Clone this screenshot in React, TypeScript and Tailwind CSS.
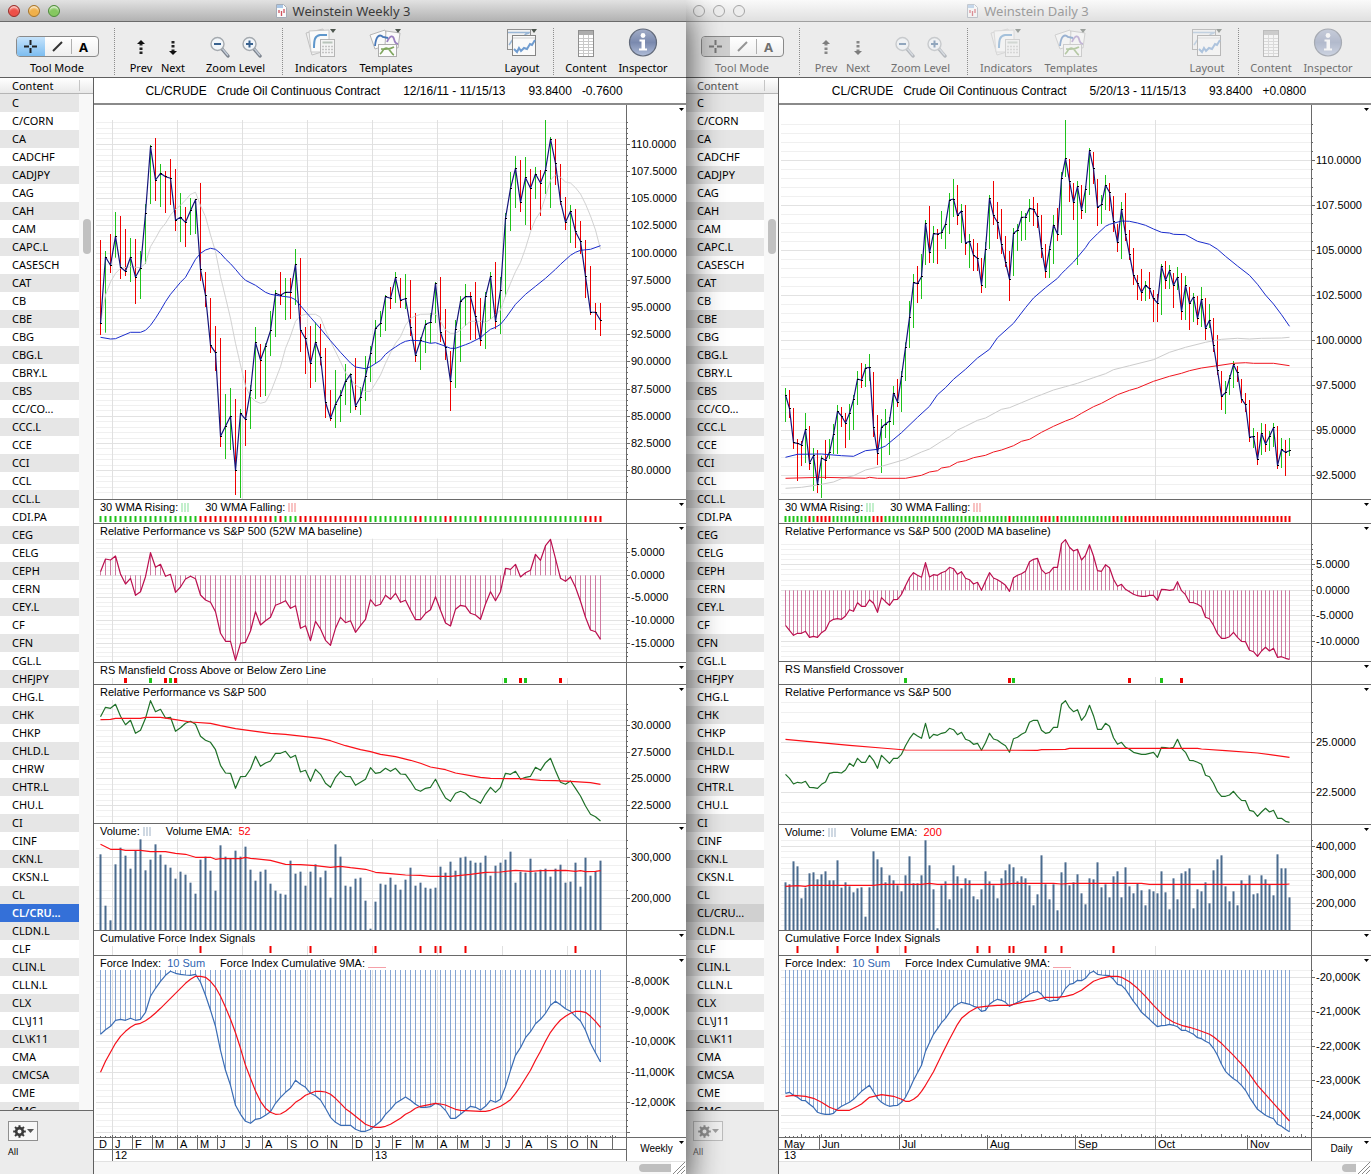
import { createContext, useContext } from "react";
import type { ReactNode } from "react";

type Point = [number, number];
type Bar = [number, number, number];

const UP = "#1fc31a";
const DOWN = "#f00000";

const symbols = [
  "C", "C/CORN", "CA", "CADCHF", "CADJPY", "CAG", "CAH", "CAM", "CAPC.L", "CASESCH",
  "CAT", "CB", "CBE", "CBG", "CBG.L", "CBRY.L", "CBS", "CC/CO...", "CCC.L", "CCE",
  "CCI", "CCL", "CCL.L", "CDI.PA", "CEG", "CELG", "CEPH", "CERN", "CEY.L", "CF",
  "CFN", "CGL.L", "CHFJPY", "CHG.L", "CHK", "CHKP", "CHLD.L", "CHRW", "CHTR.L", "CHU.L",
  "CI", "CINF", "CKN.L", "CKSN.L", "CL", "CL/CRU...", "CLDN.L", "CLF", "CLIN.L", "CLLN.L",
  "CLX", "CL\\J11", "CL\\K11", "CMA", "CMCSA", "CME", "CMG",
];

// Every sample is a depth in thirds of a pixel; each panel subtracts its own origin.
// Bars are [high, low, close].
const weeklyBars: Bar[] = [
  [420, 705, 670], [453, 698, 471], [402, 519, 496], [336, 473, 409], [348, 537, 502],
  [387, 528, 514], [414, 546, 472], [417, 612, 531], [453, 597, 504], [312, 492, 340],
  [135, 312, 140], [114, 303, 240], [192, 321, 220], [213, 339, 230], [177, 315, 235],
  [207, 393, 361], [279, 426, 352], [321, 441, 367], [294, 405, 332], [297, 402, 299],
  [249, 543, 508], [516, 621, 586], [594, 759, 736], [678, 813, 758], [714, 1041, 1009],
  [882, 1077, 979], [864, 1050, 949], [897, 1185, 1111], [927, 1194, 940], [810, 1038, 958],
  [855, 987, 872], [681, 897, 728], [732, 891, 780], [730, 888, 739], [633, 768, 692],
  [570, 711, 580], [516, 615, 586], [534, 660, 577], [534, 657, 577], [447, 615, 493],
  [474, 756, 690], [681, 822, 716], [678, 864, 790], [667, 846, 727], [672, 796, 772],
  [744, 954, 907], [870, 963, 955], [810, 984, 913], [870, 966, 886], [792, 915, 844],
  [820, 939, 823], [774, 930, 918], [861, 945, 892], [768, 903, 829], [738, 846, 761],
  [660, 792, 685], [633, 711, 670], [585, 693, 590], [561, 627, 595], [516, 609, 533],
  [534, 624, 601], [522, 627, 596], [540, 708, 682], [639, 786, 766], [712, 810, 722],
  [660, 759, 673], [639, 730, 667], [546, 669, 550], [531, 726, 697], [627, 780, 742],
  [753, 933, 844], [660, 864, 688], [588, 786, 604], [552, 678, 590], [576, 720, 590],
  [546, 718, 650], [594, 738, 721], [576, 747, 590], [516, 657, 529], [486, 687, 664],
  [531, 702, 571], [339, 591, 355], [216, 393, 265], [168, 324, 205], [180, 336, 307],
  [171, 375, 233], [207, 390, 265], [201, 297, 222], [210, 348, 249], [60, 282, 210],
  [111, 324, 117], [117, 255, 190], [192, 315, 304], [291, 390, 367], [315, 429, 334],
  [327, 444, 395], [363, 462, 424], [420, 594, 529], [498, 645, 636], [609, 690, 637],
  [609, 708, 661],
];

const weeklySlow: Point[] = [
  [0, 712], [2, 717], [3, 716], [6, 697], [8, 697], [9, 691], [10, 676], [11, 655], [12, 631], [13, 605],
  [14, 583], [15, 565], [16, 547], [17, 532], [18, 505], [19, 478], [20, 460], [21, 450], [22, 445],
  [23, 448], [24, 460], [25, 477], [26, 491], [27, 508], [28, 526], [29, 541], [31, 556], [33, 577],
  [34, 583], [36, 588], [38, 592], [39, 599], [40, 617], [42, 652], [44, 686], [46, 722], [48, 757],
  [50, 789], [51, 801], [53, 806], [54, 800], [56, 781], [57, 763], [58, 751], [59, 741], [60, 731],
  [61, 724], [62, 721], [64, 722], [66, 730], [67, 728], [69, 739], [70, 745], [71, 745], [73, 734],
  [74, 728], [76, 713], [77, 700], [78, 688], [79, 682], [80, 673], [81, 655], [83, 613], [85, 583],
  [87, 559], [89, 535], [91, 508], [92, 493], [94, 466], [95, 457], [96, 451], [98, 448], [100, 437],
];

const weeklyFast: Point[] = [
  [0, 670], [1, 585], [2, 546], [3, 520], [4, 505], [6, 500], [8, 503], [9, 490], [10, 440], [11, 415],
  [12, 388], [13, 370], [14, 345], [15, 328], [16, 316], [17, 300], [18, 283], [19, 277], [20, 317],
  [21, 350], [22, 405], [23, 455], [24, 530], [25, 592], [26, 655], [27, 730], [28, 795], [29, 858],
  [30, 890], [31, 904], [32, 910], [33, 906], [34, 878], [36, 800], [37, 745], [38, 708], [39, 664],
  [40, 647], [41, 643], [43, 643], [44, 652], [45, 690], [46, 724], [48, 785], [49, 818], [51, 855],
  [53, 874], [54, 874], [55, 850], [56, 825], [57, 790], [58, 758], [59, 730], [60, 710], [61, 676],
  [62, 655], [63, 648], [64, 643], [67, 642], [68, 664], [69, 690], [70, 700], [71, 700], [72, 690],
  [73, 676], [74, 664], [76, 664], [77, 667], [78, 658], [79, 645], [80, 630], [81, 587], [82, 550],
  [83, 515], [84, 487], [85, 445], [86, 395], [87, 358], [88, 335], [89, 290], [90, 240], [91, 225],
  [92, 232], [93, 246], [94, 249], [95, 263], [96, 282], [97, 312], [98, 348], [99, 390], [100, 448],
];

const weeklyRs = [
  230, 192, 195, 183, 237, 267, 250, 301, 290, 245, 173, 217, 208, 244, 238, 292, 276, 252, 244, 251,
  300, 315, 322, 350, 415, 439, 439, 496, 445, 442, 408, 350, 390, 377, 367, 331, 325, 317, 340, 332,
  400, 392, 437, 379, 402, 436, 451, 400, 367, 383, 377, 412, 392, 373, 314, 333, 328, 301, 313, 295,
  322, 316, 346, 374, 374, 355, 344, 305, 346, 384, 393, 343, 331, 334, 355, 360, 373, 327, 290, 317,
  290, 220, 223, 208, 246, 233, 226, 178, 196, 152, 133, 191, 250, 259, 246, 277, 319, 367, 405, 410,
  433,
];

const weeklyRp = [
  665, 637, 640, 628, 664, 689, 676, 715, 706, 670, 617, 650, 643, 669, 667, 709, 698, 685, 679, 688,
  724, 736, 742, 764, 811, 834, 835, 880, 845, 844, 822, 784, 814, 804, 798, 775, 775, 769, 788, 781,
  831, 826, 859, 823, 838, 865, 877, 847, 829, 844, 845, 871, 862, 853, 818, 835, 832, 820, 829, 820,
  837, 838, 859, 883, 889, 880, 877, 853, 883, 909, 919, 895, 889, 895, 909, 915, 925, 898, 877, 892,
  877, 835, 838, 829, 853, 847, 844, 817, 826, 803, 790, 827, 862, 868, 858, 880, 903, 933, 958, 965,
  978,
];

const weeklyRpMa: Point[] = [
  [0, 674], [2, 673], [3, 670], [8, 670], [9, 667], [12, 667], [15, 674], [18, 681], [22, 685], [24, 692],
  [27, 701], [31, 709], [34, 715], [37, 718], [41, 725], [44, 730], [46, 737], [49, 752], [52, 764],
  [54, 770], [56, 778], [59, 785], [62, 796], [64, 805], [66, 816], [69, 824], [71, 834], [74, 842],
  [76, 847], [78, 850], [84, 851], [88, 856], [91, 857], [94, 859], [98, 863], [100, 868],
];

const weeklyVolume = [
  103, 257, 301, 133, 83, 107, 146, 91, 58, 151, 119, 73, 104, 134, 143, 176, 155, 164, 188, 221,
  119, 110, 152, 212, 76, 110, 117, 92, 110, 80, 149, 182, 155, 149, 191, 212, 221, 224, 122, 161,
  155, 197, 155, 133, 172, 152, 233, 73, 110, 197, 200, 176, 173, 242, 326, 245, 191, 194, 173, 194,
  209, 179, 143, 197, 188, 203, 206, 203, 140, 158, 125, 152, 113, 110, 122, 128, 128, 107, 167, 137,
  128, 119, 95, 188, 155, 158, 116, 157, 149, 146, 170, 146, 134, 188, 185, 128, 200, 113, 167, 155,
  122,
];

const weeklyEma: Point[] = [
  [0, 73], [1, 80], [2, 88], [4, 88], [5, 91], [8, 91], [10, 95], [13, 95], [15, 100], [17, 103],
  [19, 112], [22, 112], [23, 118], [24, 116], [28, 116], [29, 112], [30, 115], [34, 121], [37, 133],
  [40, 134], [43, 137], [46, 142], [48, 139], [50, 143], [53, 148], [55, 157], [58, 161], [61, 165],
  [64, 166], [66, 169], [70, 169], [74, 163], [77, 157], [80, 156], [83, 151], [86, 154], [88, 152],
  [93, 151], [95, 154], [96, 152], [97, 155], [99, 154], [100, 152],
];

const weeklyForce = [
  643, 629, 619, 601, 598, 601, 595, 601, 598, 577, 529, 505, 484, 466, 454, 460, 463, 465, 466, 463,
  487, 526, 571, 619, 691, 751, 796, 856, 883, 904, 910, 898, 895, 886, 875, 850, 832, 817, 805, 781,
  793, 802, 820, 827, 840, 865, 892, 907, 916, 916, 916, 928, 934, 934, 928, 916, 904, 883, 868, 850,
  841, 831, 841, 853, 862, 862, 860, 850, 856, 871, 895, 895, 883, 871, 859, 862, 870, 859, 841, 847,
  838, 800, 751, 706, 683, 653, 635, 611, 598, 580, 556, 544, 554, 566, 574, 589, 603, 631, 670, 698,
  726,
];

const weeklyForceMa: Point[] = [
  [0, 757], [1, 724], [2, 697], [3, 670], [4, 649], [5, 634], [6, 622], [7, 613], [8, 610], [9, 602],
  [10, 592], [11, 579], [12, 565], [13, 550], [14, 535], [15, 520], [16, 505], [17, 490], [18, 478],
  [19, 469], [20, 469], [21, 472], [22, 484], [23, 502], [24, 529], [25, 562], [26, 598], [27, 638],
  [28, 685], [29, 736], [30, 775], [31, 813], [32, 844], [33, 865], [34, 877], [35, 883], [36, 882],
  [37, 874], [38, 862], [39, 847], [40, 838], [41, 826], [42, 820], [43, 814], [44, 814], [45, 816],
  [46, 823], [47, 835], [48, 850], [49, 866], [50, 877], [51, 889], [52, 901], [53, 913], [54, 919],
  [55, 922], [56, 922], [57, 919], [58, 913], [59, 904], [60, 895], [61, 883], [62, 875], [63, 865],
  [64, 859], [65, 856], [66, 853], [67, 850], [68, 852], [69, 855], [70, 862], [71, 868], [72, 871],
  [76, 874], [77, 874], [78, 871], [79, 865], [80, 859], [81, 850], [82, 839], [83, 820], [84, 799],
  [85, 775], [86, 751], [87, 721], [88, 694], [89, 664], [90, 637], [91, 617], [92, 600], [93, 589],
  [94, 580], [95, 574], [96, 574], [97, 577], [98, 589], [99, 604], [100, 622],
];

const dailyBars: Bar[] = [
  [864, 966, 885], [870, 954, 926], [924, 1047, 1028], [1017, 1143, 1030], [1023, 1098, 1035],
  [939, 1089, 989], [978, 1110, 1089], [1044, 1173, 1067], [1050, 1179, 1153], [1067, 1194, 1074],
  [1020, 1137, 1081], [1017, 1077, 1057], [972, 1062, 1003], [915, 1062, 934], [921, 981, 948],
  [939, 1044, 969], [912, 1020, 940], [885, 990, 898], [813, 915, 837], [789, 864, 841],
  [792, 861, 804], [762, 843, 802], [816, 1011, 982], [945, 1095, 1059], [957, 1119, 982],
  [927, 1014, 972], [951, 1065, 963], [858, 975, 879], [837, 921, 906], [813, 936, 829],
  [727, 843, 742], [603, 744, 653], [522, 684, 548], [498, 609, 551], [462, 597, 530],
  [360, 495, 370], [318, 489, 458], [378, 489, 401], [387, 492, 402], [333, 417, 398],
  [370, 447, 373], [279, 402, 300], [237, 351, 297], [255, 375, 346], [312, 429, 333],
  [315, 465, 429], [402, 504, 424], [417, 513, 466], [429, 513, 475], [474, 579, 555],
  [426, 564, 448], [285, 447, 295], [243, 375, 347], [306, 417, 367], [327, 462, 433],
  [408, 501, 486], [453, 603, 537], [384, 528, 400], [372, 453, 391], [333, 423, 352],
  [339, 420, 351], [297, 366, 325], [291, 378, 328], [309, 384, 350], [345, 474, 445],
  [432, 534, 514], [438, 534, 448], [345, 492, 375], [324, 423, 402], [216, 405, 235],
  [60, 231, 176], [177, 306, 244], [249, 360, 307], [243, 495, 260], [255, 357, 330],
  [258, 339, 268], [144, 285, 152], [156, 252, 206], [237, 378, 322], [285, 372, 314],
  [225, 330, 256], [249, 333, 277], [288, 396, 364], [372, 456, 428], [306, 477, 328],
  [279, 423, 403], [390, 480, 464], [444, 555, 526], [525, 600, 550], [507, 603, 577],
  [543, 603, 556], [516, 597, 566], [570, 666, 596], [582, 666, 609], [492, 645, 499],
  [483, 567, 541], [495, 567, 512], [519, 624, 556], [501, 570, 532], [519, 660, 634],
  [528, 660, 557], [561, 690, 611], [579, 666, 591], [588, 675, 655], [561, 681, 598],
  [594, 720, 685], [612, 684, 661], [654, 756, 737], [705, 825, 811], [813, 930, 889],
  [843, 942, 878], [825, 885, 836], [783, 864, 794], [798, 846, 818], [837, 909, 897],
  [879, 936, 914], [900, 1026, 1011], [984, 1044, 1010], [996, 1095, 1078], [969, 1065, 1000],
  [972, 1056, 1032], [993, 1053, 1009], [969, 1041, 983], [978, 1107, 1096], [1014, 1104, 1049],
  [1020, 1128, 1057], [1014, 1068, 1052],
];

const dailyFast: Point[] = [
  [0, 1072], [3, 1063], [9, 1062], [14, 1067], [17, 1069], [20, 1052], [23, 1048], [25, 1038], [26, 1028],
  [29, 998], [33, 952], [36, 919], [38, 884], [40, 863], [42, 838], [45, 808], [48, 774], [51, 748],
  [53, 713], [57, 670], [60, 623], [62, 594], [65, 563], [68, 535], [69, 521], [70, 509], [72, 486],
  [75, 443], [76, 425], [78, 401], [80, 379], [81, 373], [84, 363], [86, 364], [88, 369], [90, 376],
  [92, 387], [94, 397], [96, 399], [97, 403], [100, 404], [103, 424], [106, 433], [108, 448], [110, 469],
  [113, 498], [116, 526], [118, 553], [120, 585], [122, 612], [124, 644], [126, 679],
];

const dailyMid: Point[] = [
  [0, 1165], [4, 1162], [8, 1155], [12, 1146], [14, 1136], [17, 1127], [20, 1110], [24, 1099], [30, 1078],
  [34, 1056], [36, 1047], [39, 1024], [41, 1010], [43, 990], [45, 979], [48, 961], [50, 954], [54, 928],
  [56, 923], [59, 908], [62, 893], [64, 884], [67, 870], [70, 860], [73, 850], [77, 833], [80, 821],
  [82, 809], [86, 797], [92, 779], [96, 757], [100, 742], [105, 727], [109, 718], [113, 715], [116, 717],
  [119, 715], [124, 714], [126, 712],
];

const dailySlow: Point[] = [
  [0, 1135], [9, 1132], [20, 1135], [21, 1132], [23, 1135], [30, 1135], [34, 1126], [36, 1116], [38, 1112],
  [39, 1104], [41, 1100], [43, 1087], [45, 1082], [47, 1073], [50, 1066], [52, 1056], [54, 1050],
  [57, 1037], [59, 1024], [61, 1018], [64, 997], [67, 979], [70, 963], [72, 954], [74, 940], [77, 920],
  [79, 910], [83, 884], [86, 871], [88, 864], [92, 844], [96, 829], [99, 820], [101, 812], [104, 804],
  [108, 797], [112, 790], [115, 788], [117, 790], [122, 790], [126, 797],
];

const dailyRs = [
  391, 406, 421, 415, 415, 409, 427, 424, 427, 413, 405, 380, 373, 371, 373, 363, 344, 349, 323, 334,
  334, 314, 325, 352, 308, 320, 331, 314, 313, 298, 272, 248, 233, 241, 247, 203, 246, 239, 241, 233,
  229, 217, 221, 238, 230, 250, 254, 267, 262, 286, 259, 233, 249, 254, 262, 271, 289, 248, 241, 236,
  229, 200, 193, 190, 224, 236, 232, 217, 217, 146, 134, 157, 168, 163, 195, 181, 149, 183, 227, 229,
  209, 218, 253, 274, 268, 283, 290, 298, 302, 304, 304, 301, 301, 316, 283, 284, 286, 284, 260, 287,
  299, 322, 323, 328, 335, 367, 371, 391, 416, 430, 430, 425, 412, 427, 439, 440, 466, 470, 484, 468,
  457, 468, 460, 487, 485, 490, 493,
];

const dailyRp = [
  838, 850, 867, 862, 864, 859, 877, 878, 880, 868, 861, 835, 832, 832, 834, 825, 805, 814, 790, 802,
  802, 781, 796, 820, 781, 793, 805, 790, 790, 778, 752, 731, 715, 723, 730, 685, 730, 718, 721, 715,
  712, 700, 704, 719, 712, 733, 737, 748, 745, 766, 743, 715, 732, 736, 745, 752, 772, 731, 727, 718,
  712, 682, 676, 676, 706, 715, 712, 697, 697, 628, 617, 638, 650, 644, 676, 661, 631, 662, 703, 703,
  685, 694, 728, 748, 742, 757, 763, 772, 775, 778, 778, 775, 772, 787, 757, 758, 760, 757, 733, 760,
  772, 796, 797, 802, 808, 841, 845, 865, 890, 904, 904, 900, 889, 904, 916, 917, 946, 949, 964, 951,
  940, 951, 946, 970, 970, 979, 982,
];

const dailyRpMa: Point[] = [
  [0, 733], [8, 742], [16, 751], [24, 759], [30, 765], [63, 766], [64, 764], [70, 763], [71, 760],
  [103, 760], [104, 762], [110, 767], [118, 774], [126, 787],
];

const dailyVolume = [
  187, 193, 124, 139, 235, 203, 160, 157, 178, 163, 154, 181, 181, 121, 203, 187, 199, 217, 205, 202,
  290, 202, 94, 118, 142, 187, 166, 181, 196, 214, 166, 109, 190, 190, 166, 61, 136, 208, 325, 196,
  184, 238, 136, 169, 205, 175, 181, 229, 238, 208, 154, 184, 196, 235, 175, 151, 133, 142, 184, 169,
  175, 196, 256, 223, 106, 193, 238, 193, 271, 157, 127, 196, 187, 163, 220, 253, 175, 178, 127, 202,
  193, 232, 169, 154, 232, 142, 199, 220, 190, 211, 256, 208, 214, 220, 154, 217, 268, 175, 238, 160,
  154, 145, 265, 208, 214, 187, 250, 151, 118, 106, 199, 244, 214, 256, 181, 193, 166, 223, 220, 166,
  178, 193, 226, 103, 145, 145, 232,
];

const dailyEma: Point[] = [
  [0, 199], [3, 197], [5, 199], [6, 196], [22, 196], [24, 193], [34, 193], [36, 190], [38, 193], [54, 193],
  [57, 190], [67, 190], [69, 192], [71, 190], [89, 190], [91, 193], [125, 193], [126, 192],
];

const dailyForce = [
  820, 817, 826, 832, 841, 842, 853, 862, 877, 881, 883, 883, 880, 867, 859, 853, 847, 838, 826, 814,
  805, 796, 815, 835, 847, 854, 859, 857, 856, 847, 832, 808, 781, 758, 736, 694, 668, 643, 626, 608,
  595, 577, 562, 553, 547, 550, 553, 559, 562, 574, 571, 553, 544, 538, 541, 547, 559, 553, 547, 541,
  532, 523, 517, 514, 523, 538, 544, 541, 541, 526, 505, 493, 490, 481, 482, 475, 460, 454, 463, 465,
  466, 467, 478, 493, 496, 508, 526, 544, 559, 577, 587, 598, 610, 620, 617, 616, 613, 616, 620, 631,
  631, 637, 643, 653, 656, 664, 670, 685, 706, 733, 754, 766, 776, 784, 796, 811, 832, 850, 868, 877,
  886, 892, 896, 913, 919, 928, 935,
];

const dailyForceMa: Point[] = [
  [0, 829], [2, 826], [5, 829], [7, 835], [9, 847], [11, 862], [13, 871], [16, 871], [18, 859], [19, 852],
  [21, 832], [24, 824], [27, 829], [29, 838], [30, 844], [31, 844], [32, 838], [33, 829], [34, 814],
  [35, 796], [37, 755], [39, 706], [41, 658], [43, 613], [44, 595], [46, 575], [48, 562], [50, 559],
  [53, 556], [56, 556], [58, 550], [60, 545], [62, 542], [64, 535], [65, 532], [68, 532], [70, 529],
  [72, 523], [74, 511], [76, 493], [77, 484], [79, 475], [81, 469], [83, 469], [84, 472], [86, 485],
  [88, 505], [90, 529], [92, 556], [94, 580], [95, 592], [97, 607], [99, 616], [101, 622], [103, 629],
  [104, 634], [106, 643], [107, 650], [109, 670], [112, 706], [115, 745], [118, 796], [122, 850], [126, 903],
];

type Scale = { first: number; step: number; labels: string[] };
type PlotSpec = { height: number; origin: number; top: number; scale?: Scale };
type Mark = [number, "g" | "r"];

type Chart = {
  name: string;
  active: boolean;
  range: string;
  change: string;
  period: string;
  pitch: number;
  gridX: number[];
  bars: Bar[];
  firstUp: boolean;
  averages: { color: string; points: Point[] }[];
  trend: string;
  rsTitle: string;
  rs: number[];
  rsZero: number;
  crossTitle: string;
  crosses: Mark[];
  rp: number[];
  rpMa: Point[];
  emaLength: string;
  volume: number[];
  ema: Point[];
  signals: number[];
  force: number[];
  forceMa: Point[];
  plots: { price: PlotSpec; trend: PlotSpec; rs: PlotSpec; cross: PlotSpec; rp: PlotSpec; volume: PlotSpec; signals: PlotSpec; force: PlotSpec };
  months: [number, string][];
  years: [number, string][];
  bigTick: number;
};

const weekly: Chart = {
  name: "Weinstein Weekly 3",
  active: true,
  range: "12/16/11 - 11/15/13",
  change: "-0.7600",
  period: "Weekly",
  pitch: 5,
  gridX: [18, 83, 148, 213, 278, 343, 408, 473],
  bars: weeklyBars,
  firstUp: false,
  averages: [
    { color: "#d2d2d2", points: weeklyFast },
    { color: "#1a2ccc", points: weeklySlow },
  ],
  trend: "g20 r15 g1 r1 g3 r14 g9 r2 g4 r2 g5 r1 g20 r4",
  rsTitle: "Relative Performance vs S&P 500 (52W MA baseline)",
  rs: weeklyRs,
  rsZero: 241,
  crossTitle: "RS Mansfield Cross Above or Below Zero Line",
  crosses: [[5, "r"], [10, "g"], [13, "r"], [14, "g"], [15, "r"], [81, "g"], [84, "r"], [85, "g"], [92, "r"]],
  rp: weeklyRp,
  rpMa: weeklyRpMa,
  emaLength: "52",
  volume: weeklyVolume,
  ema: weeklyEma,
  signals: [20, 34, 42, 55, 64, 67, 68, 73, 95],
  force: weeklyForce,
  forceMa: weeklyForceMa,
  plots: {
    price: {
      height: 394, origin: 15, top: 60,
      scale: {
        first: 133, step: 81.6,
        labels: ["110.0000", "107.5000", "105.0000", "102.5000", "100.0000", "97.5000", "95.0000", "92.5000", "90.0000", "87.5000", "85.0000", "82.5000", "80.0000"],
      },
    },
    trend: { height: 23, origin: 15, top: 90 },
    rs: { height: 138, origin: 87, top: 131, scale: { first: 173, step: 67.8, labels: ["5.0000", "0.0000", "-5.0000", "-10.0000", "-15.0000"] } },
    cross: { height: 21, origin: 504, top: 549 },
    rp: { height: 138, origin: 570, top: 615, scale: { first: 691, step: 80, labels: ["30.0000", "27.5000", "25.0000", "22.5000"] } },
    volume: { height: 106, origin: 12, top: 57, scale: { first: 111, step: 124, labels: ["300,000", "200,000"] } },
    signals: { height: 24, origin: 333, top: 378 },
    force: { height: 181, origin: 408, top: 450, scale: { first: 484, step: 90.8, labels: ["-8,000K", "-9,000K", "-10,000K", "-11,000K", "-12,000K"] } },
  },
  months: [
    [2, "D"], [18, "J"], [38, "F"], [58, "M"], [83, "A"], [103, "M"], [123, "J"], [148, "J"], [168, "A"], [193, "S"],
    [213, "O"], [233, "N"], [258, "D"], [278, "J"], [298, "F"], [318, "M"], [343, "A"], [363, "M"], [388, "J"],
    [408, "J"], [428, "A"], [453, "S"], [473, "O"], [493, "N"], [518, ""],
  ],
  years: [[18, "12"], [278, "13"]],
  bigTick: 0,
};

const daily: Chart = {
  name: "Weinstein Daily 3",
  active: false,
  range: "5/20/13 - 11/15/13",
  change: "+0.0800",
  period: "Daily",
  pitch: 4,
  gridX: [120, 376],
  bars: dailyBars,
  firstUp: true,
  averages: [
    { color: "#cccccc", points: dailyMid },
    { color: "#f0141e", points: dailySlow },
    { color: "#1a2ccc", points: dailyFast },
  ],
  trend: "g6 r1 g1 r4 g10 r3 g31 r1 g7 r3 g1 r1 g13 r2 g1 r42",
  rsTitle: "Relative Performance vs S&P 500 (200D MA baseline)",
  rs: dailyRs,
  rsZero: 286,
  crossTitle: "RS Mansfield Crossover",
  crosses: [[30, "g"], [56, "r"], [57, "g"], [86, "r"], [94, "g"], [99, "r"]],
  rp: dailyRp,
  rpMa: dailyRpMa,
  emaLength: "200",
  volume: dailyVolume,
  ema: dailyEma,
  signals: [3, 13, 23, 30, 48, 51, 56, 57, 65, 69, 82],
  force: dailyForce,
  forceMa: dailyForceMa,
  plots: {
    price: {
      height: 394, origin: 15, top: 60,
      scale: { first: 181, step: 135, labels: ["110.0000", "107.5000", "105.0000", "102.5000", "100.0000", "97.5000", "95.0000", "92.5000"] },
    },
    trend: { height: 23, origin: 15, top: 90 },
    rs: { height: 137, origin: 87, top: 134, scale: { first: 209, step: 76.8, labels: ["5.0000", "0.0000", "-5.0000", "-10.0000"] } },
    cross: { height: 22, origin: 501, top: 546 },
    rp: { height: 139, origin: 570, top: 615, scale: { first: 742, step: 150, labels: ["25.0000", "22.5000"] } },
    volume: { height: 105, origin: 15, top: 60, scale: { first: 78, step: 85.5, labels: ["400,000", "300,000", "200,000"] } },
    signals: { height: 24, origin: 333, top: 378 },
    force: { height: 181, origin: 408, top: 450, scale: { first: 472, step: 103.4, labels: ["-20,000K", "-21,000K", "-22,000K", "-23,000K", "-24,000K"] } },
  },
  months: [[2, "May"], [40, "Jun"], [120, "Jul"], [208, "Aug"], [296, "Sep"], [376, "Oct"], [468, "Nov"]],
  years: [[2, "13"]],
  bigTick: 5,
};

const ChartContext = createContext<Chart>(weekly);

const yOf = (plot: PlotSpec, v: number) => (v - plot.origin) / 3;

function Line({ plot, points, color, width = 1 }: { plot: PlotSpec; points: Point[]; color: string; width?: number }) {
  const { pitch } = useContext(ChartContext);
  return (
    <polyline
      fill="none"
      stroke={color}
      strokeWidth={width}
      strokeLinejoin="round"
      points={points.map(([i, v]) => `${6.5 + i * pitch},${yOf(plot, v).toFixed(1)}`).join(" ")}
    />
  );
}

const indexed = (values: number[]): Point[] => values.map((v, i) => [i, v]);

function gridLevels(plot: PlotSpec) {
  if (!plot.scale) return [];
  const { first, step, labels } = plot.scale;
  const levels: { y: number; major: boolean; label?: string }[] = [];
  for (let k = -15; k < labels.length * 5 + 10; k++) {
    const v = first + (k * step) / 5;
    const y = Math.floor(yOf(plot, v));
    if (v < plot.top || y > plot.height - 3) continue;
    levels.push({ y, major: k % 5 === 0, label: k % 5 === 0 ? labels[k / 5] : undefined });
  }
  return levels;
}

function MenuArrow({ label }: { label: string }) {
  return (
    <button type="button" aria-label={label} className="absolute top-[3px] right-[2px] block">
      <svg width="5" height="3" className="block">
        <path d="M0 0h5L2.5 3z" fill="#000" />
      </svg>
    </button>
  );
}

function Panel({ plot, title, name, children }: { plot: PlotSpec; title?: ReactNode; name: string; children: ReactNode }) {
  const { gridX } = useContext(ChartContext);
  const levels = gridLevels(plot);
  const top = yOf(plot, plot.top);
  return (
    <section aria-label={name} className="flex border-b border-[#6a6a6a] bg-white">
      <div className="relative min-w-0 flex-1">
        <svg className="block w-full" height={plot.height}>
          {levels.map((l) => (
            <rect key={l.y} x="2" y={l.y} width="100%" height="1" fill={l.major ? "#e2e2e2" : "#f0f0f0"} />
          ))}
          {gridX.map((x) => (
            <rect key={x} x={x} y={top} width="1" height={Math.max(plot.height - top, 0)} fill="#e0e0e0" />
          ))}
          {children}
        </svg>
        {title && <div className="absolute top-0 left-[6px] flex h-[14px] items-center whitespace-pre">{title}</div>}
      </div>
      <div className="relative w-[60px] shrink-0 border-l border-[#6a6a6a]">
        <svg className="block w-full" height={plot.height}>
          {levels.map((l) => (
            <g key={l.y}>
              <rect x="0" y={l.y} width={l.major ? 3 : 1} height="1" fill="#6a6a6a" />
              {l.label && (
                <text x="4" y={l.y + 4} fill="#000">
                  {l.label}
                </text>
              )}
            </g>
          ))}
        </svg>
        <MenuArrow label={`${name} options`} />
      </div>
    </section>
  );
}

function Swatch({ color }: { color: string }) {
  return (
    <svg width="8" height="9" className="ml-[3px]">
      <path d="M1 0v9M4 0v9M7 0v9" stroke={color} strokeWidth="1.6" />
    </svg>
  );
}

function PricePanel() {
  const { bars, pitch, averages, firstUp, plots } = useContext(ChartContext);
  const plot = plots.price;
  return (
    <Panel plot={plot} name="Price">
      {bars.map(([high, low, close], i) => {
        const up = i === 0 ? firstUp : close < bars[i - 1][2];
        return (
          <rect
            key={i}
            x={6 + i * pitch}
            y={yOf(plot, high)}
            width="1"
            height={(low - high) / 3}
            fill={up ? UP : DOWN}
          />
        );
      })}
      {averages.map((a) => (
        <Line key={a.color} plot={plot} points={a.points} color={a.color} />
      ))}
      <Line plot={plot} points={bars.map((b, i) => [i, b[2]])} color="#14147a" width={1.2} />
      {bars.map((b, i) => (
        <rect key={i} x={6 + i * pitch} y={Math.floor(yOf(plot, b[2]))} width="2" height="1" fill="#000" />
      ))}
    </Panel>
  );
}

function TrendPanel() {
  const { trend, pitch, plots } = useContext(ChartContext);
  const marks = trend.split(" ").flatMap((run) => Array<string>(Number(run.slice(1))).fill(run[0]));
  return (
    <Panel
      plot={plots.trend}
      name="30 WMA"
      title={
        <>
          <span>30 WMA Rising:</span>
          <Swatch color="#b4ecc0" />
          <span className="ml-4">30 WMA Falling:</span>
          <Swatch color="#f7b4b4" />
        </>
      }
    >
      {marks.map((m, i) => (
        <rect key={i} x={5.5 + i * pitch} y="16" width="2" height="6" fill={m === "g" ? UP : DOWN} />
      ))}
    </Panel>
  );
}

function StrengthPanel() {
  const { rs, rsZero, rsTitle, pitch, plots } = useContext(ChartContext);
  const zero = yOf(plots.rs, rsZero);
  return (
    <Panel plot={plots.rs} name="Relative strength" title={rsTitle}>
      {rs.map((v, i) => {
        const y = yOf(plots.rs, v);
        return (
          <rect key={i} x={6 + i * pitch} y={Math.min(y, zero)} width="1" height={Math.abs(y - zero)} fill="#cf7ba2" />
        );
      })}
      <Line plot={plots.rs} points={indexed(rs)} color="#bb0f4e" width={1.2} />
    </Panel>
  );
}

function CrossPanel() {
  const { crosses, crossTitle, pitch, plots } = useContext(ChartContext);
  return (
    <Panel plot={plots.cross} name="Mansfield crossings" title={crossTitle}>
      {crosses.map(([i, c]) => (
        <rect key={i} x={5 + i * pitch} y={plots.cross.height - 6} width="3" height="5" fill={c === "g" ? UP : DOWN} />
      ))}
    </Panel>
  );
}

function PerformancePanel() {
  const { rp, rpMa, plots } = useContext(ChartContext);
  return (
    <Panel plot={plots.rp} name="Relative performance" title="Relative Performance vs S&P 500">
      <Line plot={plots.rp} points={indexed(rp)} color="#1f7028" width={1.2} />
      <Line plot={plots.rp} points={rpMa} color="#fb1018" width={1.2} />
    </Panel>
  );
}

function VolumePanel() {
  const { volume, ema, emaLength, pitch, plots } = useContext(ChartContext);
  const plot = plots.volume;
  return (
    <Panel
      plot={plot}
      name="Volume"
      title={
        <>
          <span>Volume:</span>
          <Swatch color="#c3cfdb" />
          <span className="ml-[15px]">Volume EMA:</span>
          <span className="ml-[6px] text-[#fb0007]">{emaLength}</span>
        </>
      }
    >
      {volume.map((v, i) => {
        const y = yOf(plot, v);
        return <rect key={i} x={5.5 + i * pitch} y={y} width="2" height={plot.height - y} fill="#4a6b8e" />;
      })}
      <Line plot={plot} points={ema} color="#fb1018" width={1.2} />
    </Panel>
  );
}

function SignalsPanel() {
  const { signals, pitch, plots } = useContext(ChartContext);
  return (
    <Panel plot={plots.signals} name="Force signals" title="Cumulative Force Index Signals">
      {signals.map((i) => (
        <rect key={i} x={5.5 + i * pitch} y="15" width="2" height="7" fill={DOWN} />
      ))}
    </Panel>
  );
}

function ForcePanel() {
  const { force, forceMa, pitch, months, bigTick, plots } = useContext(ChartContext);
  const plot = plots.force;
  const top = yOf(plot, plot.top);
  const ticks = Array.from({ length: Math.floor(524 / pitch) }, (_, i) => i);
  return (
    <Panel
      plot={plot}
      name="Force index"
      title={
        <>
          <span>Force Index:</span>
          <span className="ml-[6px] text-[#2f64b0]">10 Sum</span>
          <span className="ml-[15px]">Force Index Cumulative 9MA:</span>
          <span className="mt-[9px] ml-[3px] h-px w-[18px] bg-[#f5a0a8]" />
        </>
      }
    >
      {force.map((v, i) => (
        <rect key={i} x={6 + i * pitch} y={top} width="1" height={yOf(plot, v) - top} fill="#86a5d2" />
      ))}
      <Line plot={plot} points={indexed(force)} color="#3a6cb4" width={1.2} />
      <Line plot={plot} points={forceMa} color="#f5101a" width={1.2} />
      {ticks.map((i) => {
        const tall = bigTick > 0 && i % bigTick === 4;
        return <rect key={i} x={6 + i * pitch} y={tall ? 178 : 180} width="1" height={tall ? 3 : 1} fill="#6a6a6a" />;
      })}
      {months.slice(1).map(([x]) => (
        <rect key={x} x={x} y="179" width="1" height="2" fill="#6a6a6a" />
      ))}
    </Panel>
  );
}

function TimeAxis() {
  const { months, years, period } = useContext(ChartContext);
  return (
    <div className="flex bg-white">
      <svg className="block min-w-0 flex-1" height="23">
        <rect x="0" y="11" width="100%" height="1" fill="#6a6a6a" />
        {months.map(([x, label]) => (
          <g key={x}>
            {x > 2 && <rect x={x} y="0" width="1" height="11" fill="#6a6a6a" />}
            <text x={x + 3} y="10">
              {label}
            </text>
          </g>
        ))}
        {years.map(([x, label]) => (
          <g key={x}>
            {x > 2 && <rect x={x} y="0" width="1" height="23" fill="#6a6a6a" />}
            <text x={x + 3} y="21">
              {label}
            </text>
          </g>
        ))}
      </svg>
      <div className="relative flex w-[60px] shrink-0 items-center justify-center border-l border-[#6a6a6a] pb-[2px]">
        <button type="button" className="text-[10px] leading-3">
          {period}
        </button>
        <MenuArrow label="Period" />
      </div>
    </div>
  );
}

/* Toolbar icons */

function ArrowIcon({ flip }: { flip?: boolean }) {
  return (
    <svg width="14" height="21" viewBox="0 0 14 21" className={flip ? "rotate-180" : undefined}>
      <path d="M7 3l4 4H3z" fill="#111" />
      <path d="M5.5 7h3v1.500h-3zM5.5 10.500h3v2.500h-3zM5.5 14.500h3V17h-3z" fill="#222" />
    </svg>
  );
}

function MagnifierIcon({ plus }: { plus?: boolean }) {
  return (
    <svg width="22" height="23" viewBox="0 0 22 23">
      <path d="M13 13l6 7" stroke="#7c838d" strokeWidth="3.4" strokeLinecap="round" />
      <path d="M13.5 13l5.5 6.5" stroke="#c3ccd8" strokeWidth="1.4" />
      <circle cx="8.5" cy="8" r="6.5" fill="#f2f6fa" stroke="#a5aaaf" strokeWidth="1.4" />
      <path d={plus ? "M5 8h7M8.5 4.5v7" : "M5 8h7"} stroke="#39628f" strokeWidth="2" />
    </svg>
  );
}

function DropMark() {
  return <path d="M26 1h6l-3 4z" fill="#4d564e" />;
}

function IndicatorsIcon() {
  return (
    <svg width="34" height="30" viewBox="0 0 34 30">
      <path d="M2 5l17-4 5 21-16 5z" fill="#f0f0f0" stroke="#c2c2c2" />
      <path d="M5 3l20-1v22H7z" fill="#fafafa" stroke="#c8c8c8" />
      <path d="M10 20c0-9 1-12 6-13h7" fill="none" stroke="#5f97cc" strokeWidth="2" />
      <rect x="16.5" y="11.5" width="14" height="17" fill="#f4f4f4" stroke="#b5b5b5" />
      <path d="M18.5 14.5h10" stroke="#b9c4bb" strokeWidth="2" />
      <path d="M18 18.5h11M18 21.5h11M18 24.5h11" stroke="#c4c4c4" strokeWidth="1.5" strokeDasharray="2 1" />
      <DropMark />
    </svg>
  );
}

function TemplatesIcon() {
  return (
    <svg width="34" height="30" viewBox="0 0 34 30">
      <path d="M1 7l15-5 5 14-15 5z" fill="#fafafa" stroke="#b5b5b5" />
      <path d="M17 3l14 2-2 15-13-3z" fill="#fafafa" stroke="#b5b5b5" />
      <path d="M18 14c3-7 6-7 7-3s2 5 4 5" fill="none" stroke="#9a7fc0" strokeWidth="1.8" />
      <path d="M6 18c1-11 5-12 8-9l5 1" fill="none" stroke="#4878b8" strokeWidth="1.8" />
      <rect x="9.5" y="16.5" width="18" height="12" fill="#fbfbfb" stroke="#adadad" />
      <path d="M11 26c3-2 3-6 6-6 4 0 5 6 8 7M12 21c4 0 8 1 13-2" fill="none" stroke="#7fa65e" strokeWidth="1.6" />
      <DropMark />
    </svg>
  );
}

function LayoutIcon() {
  return (
    <svg width="34" height="30" viewBox="0 0 34 30">
      <rect x="2.5" y="1.5" width="23" height="20" fill="#f2f2f2" stroke="#909090" />
      <path d="M3 4.5h22M4 17l4-6 3-2 4 3 6-6 3-1" stroke="#9ab7d6" strokeWidth="1.5" fill="none" />
      <rect x="7.5" y="7.5" width="23" height="20" fill="#fafafa" stroke="#858585" />
      <path d="M8 10h22" stroke="#d0d0d0" />
      <path d="M9 21l3 3 2-4 2 3 3-3 3 1 3-5 2 1 3-5" fill="none" stroke="#6f9cd0" strokeWidth="2" />
      <DropMark />
    </svg>
  );
}

function ContentIcon() {
  return (
    <svg width="16" height="28" viewBox="0 0 16 28">
      <rect x=".5" y=".5" width="15" height="26" fill="#fff" stroke="#8e8e8e" />
      <path d="M1 3h14" stroke="#adadad" strokeWidth="4" />
      <path d="M1 8.5h14M1 11.5h14M1 14.5h14M1 17.5h14M1 20.5h14M1 23.5h14M5.5 5v21M10.5 5v21" stroke="#c9c9c9" />
    </svg>
  );
}

function InspectorIcon() {
  return (
    <svg width="30" height="30" viewBox="0 0 30 30">
      <defs>
        <linearGradient id="inspector" x1="0" y1="0" x2="0" y2="1">
          <stop offset="0" stopColor="#a3aec8" />
          <stop offset=".5" stopColor="#7a89ae" />
          <stop offset="1" stopColor="#b0bdd8" />
        </linearGradient>
      </defs>
      <circle cx="15" cy="14.5" r="13.5" fill="url(#inspector)" stroke="#626a7a" strokeWidth="1.2" />
      <circle cx="15" cy="7.5" r="2.4" fill="#fff" />
      <path d="M11.5 11.5H17v9h2v2h-8v-2h2.5v-7h-2z" fill="#fff" />
    </svg>
  );
}

function GearIcon() {
  return (
    <svg width="13" height="13" viewBox="-7 -7 14 14">
      <circle r="3.6" fill="none" stroke="#3a3a3a" strokeWidth="2.8" />
      <path
        d="M0-6.800V-4M0 6.800V4M-6.800 0H-4M6.800 0H4M-4.800-4.800l2 2M4.800 4.800l-2-2M-4.800 4.800l2-2M4.800-4.800l-2 2"
        stroke="#3a3a3a"
        strokeWidth="2.2"
      />
    </svg>
  );
}

function ToolButton({ label, width, children }: { label: string; width: string; children: ReactNode }) {
  return (
    <button type="button" className={`flex flex-col items-center ${width}`}>
      <span className="flex h-[32px] items-end justify-center pb-px">{children}</span>
      <span className="text-[11px] leading-[18px]">{label}</span>
    </button>
  );
}

function Divider() {
  return <div className="mt-[-2px] h-[50px] w-px shrink-0 border-l border-dotted border-[#8c8c8c]" />;
}

function Toolbar() {
  const { active } = useContext(ChartContext);
  const picked = active ? "bg-gradient-to-b from-[#c5e3fb] to-[#7cbdf0]" : "bg-[#cfcfcf]";
  return (
    <div
      className={`flex h-14 shrink-0 border-b border-[#5f5f5f] bg-[#ececec] pt-[5px] ${active ? "text-black" : "text-[#707070]"}`}
    >
      <div className={`flex min-w-0 flex-1 overflow-hidden ${active ? "" : "[&_svg]:opacity-50"}`}>
        <div className="flex w-[114px] shrink-0 flex-col items-center">
          <div className="flex h-[32px] items-end pb-[2px]">
            <div className="flex h-[21px] overflow-hidden rounded-[4px] border border-[#8a8a8a] bg-gradient-to-b from-white to-[#efefef]">
              <button type="button" aria-label="Crosshair" className={`flex w-7 items-center justify-center ${picked}`}>
                <svg width="13" height="13">
                  <path d="M6.5 0v5M6.5 8v5M0 6.5h5M8 6.5h5" stroke="#222" strokeWidth="2" />
                </svg>
              </button>
              <button type="button" aria-label="Line" className="flex w-[26px] items-center justify-center">
                <svg width="11" height="11">
                  <path d="M1 10l9-9" stroke="#333" strokeWidth="2" />
                </svg>
              </button>
              <button
                type="button"
                aria-label="Text"
                className="my-[2px] w-[27px] border-l border-[#b0b0b0] pr-[2px] text-[13px] leading-[14px] font-bold"
              >
                A
              </button>
            </div>
          </div>
          <span className="text-[11px] leading-[18px]">Tool Mode</span>
        </div>
        <Divider />
        <div className="flex shrink-0 pl-[10px]">
          <ToolButton label="Prev" width="w-8">
            <ArrowIcon />
          </ToolButton>
          <ToolButton label="Next" width="w-8">
            <ArrowIcon flip />
          </ToolButton>
        </div>
        <div className="flex w-[93px] shrink-0 flex-col items-center">
          <div className="flex h-[32px] items-end gap-[10px]">
            <button type="button" aria-label="Zoom out">
              <MagnifierIcon />
            </button>
            <button type="button" aria-label="Zoom in">
              <MagnifierIcon plus />
            </button>
          </div>
          <span className="text-[11px] leading-[18px]">Zoom Level</span>
        </div>
        <Divider />
        <ToolButton label="Indicators" width="w-[76px]">
          <IndicatorsIcon />
        </ToolButton>
        <ToolButton label="Templates" width="w-[54px]">
          <TemplatesIcon />
        </ToolButton>
        <div className="flex-1" />
        <ToolButton label="Layout" width="w-[62px]">
          <LayoutIcon />
        </ToolButton>
        <Divider />
        <ToolButton label="Content" width="w-16">
          <ContentIcon />
        </ToolButton>
        <div className="flex shrink-0 pr-[18px]">
          <ToolButton label="Inspector" width="w-[50px]">
            <InspectorIcon />
          </ToolButton>
        </div>
      </div>
    </div>
  );
}

function TitleBar() {
  const { active, name } = useContext(ChartContext);
  const lights = active
    ? ["border-[#96302b] bg-[#ee5048]", "border-[#a5742b] bg-[#f0b04a]", "border-[#4e8a3c] bg-[#86c860]"]
    : ["border-[#a5a5a5] bg-[#eeeeee]", "border-[#a5a5a5] bg-[#eeeeee]", "border-[#a5a5a5] bg-[#eeeeee]"];
  return (
    <header
      className={`flex h-[22px] shrink-0 items-center border-b px-2 ${
        active ? "border-[#6b6b6b] bg-gradient-to-b from-[#e2e2e2] to-[#b2b2b2]" : "border-[#a0a0a0] bg-gradient-to-b from-[#fafafa] to-[#e0e0e0]"
      }`}
    >
      <div className="flex flex-1 gap-2">
        {["Close", "Minimize", "Zoom"].map((label, i) => (
          <button
            key={label}
            type="button"
            aria-label={label}
            className={`size-3 rounded-full border ${lights[i]} ${active ? "shadow-[inset_0_3px_2px_-1px_rgba(255,255,255,0.7)]" : ""}`}
          />
        ))}
      </div>
      <h1 className={`flex items-center gap-[6px] text-[13px] leading-5 ${active ? "text-[#3a3a3a]" : "text-[#9c9c9c]"}`}>
        <svg width="11" height="14" viewBox="0 0 11 14" className={active ? "" : "opacity-60"}>
          <path d="M.5.5h7l3 3v10H.5z" fill="#fbfbfb" stroke="#a5adb8" />
          <path d="M1 1h6v3H1z" fill="#a9c6e6" />
          <path d="M3 6v3M5.5 7v5M8 5v4" stroke="#d0525c" strokeWidth="1.3" />
        </svg>
        {name}
      </h1>
      <div className="flex-1" />
    </header>
  );
}

function Sidebar() {
  const { active } = useContext(ChartContext);
  return (
    <aside className="flex w-[94px] shrink-0 flex-col border-r border-[#5f5f5f] text-[11px]">
      <div className="flex h-4 shrink-0 border-b border-[#b5b5b5] bg-gradient-to-b from-white to-[#e9e9e9] leading-4">
        <span className={`my-[2px] w-20 border-r border-[#c5c5c5] pl-3 leading-3 ${active ? "" : "text-[#555]"}`}>Content</span>
      </div>
      <div className="flex h-0 grow overflow-hidden bg-white">
        <ul className="w-[79px]">
          {symbols.map((s, i) => {
            const selected = s === "CL/CRU...";
            let row = i % 2 === 0 ? "bg-[#e6e6e6]" : "bg-white";
            if (selected) row = active ? "bg-[#3470d8] text-white font-semibold" : "bg-[#d0d0d0]";
            return (
              <li key={s}>
                <button type="button" className={`block h-[18px] w-full pl-3 text-left leading-[18px] ${row}`}>
                  {s}
                </button>
              </li>
            );
          })}
        </ul>
        <div className="flex-1 bg-[#f8f8f8] pt-[125px] pl-1">
          <div className="h-[35px] w-2 rounded-full bg-[#c1c1c1]" />
        </div>
      </div>
      <footer className="h-16 shrink-0 border-t border-[#6a6a6a] bg-[#ececec] pt-[10px] pl-2">
        <button
          type="button"
          aria-label="Actions"
          className={`flex h-5 w-[30px] items-center justify-center gap-px border border-[#8f8f8f] bg-[#f7f7f7] ${active ? "" : "opacity-50"}`}
        >
          <GearIcon />
          <svg width="7" height="4">
            <path d="M0 0h7L3.5 4z" fill="#555" />
          </svg>
        </button>
        <p className={`mt-[3px] text-[9px] leading-4 ${active ? "" : "text-[#666]"}`}>All</p>
      </footer>
    </aside>
  );
}

function ChartWindow({ chart }: { chart: Chart }) {
  return (
    <ChartContext.Provider value={chart}>
      <div
        className={`relative flex min-w-0 flex-1 flex-col font-['Lucida_Grande','Noto_Sans',sans-serif] text-black ${
          chart.active ? "z-10 rounded-t-[4px] shadow-[0_14px_36px_rgba(0,0,0,0.8)]" : "-ml-px"
        }`}
      >
        <TitleBar />
        <Toolbar />
        <div className="flex flex-1">
          <Sidebar />
          <main className="flex min-w-0 flex-1 flex-col bg-white font-['Liberation_Sans',Arial,sans-serif] text-[11px]">
            <div className="flex h-[27px] items-center justify-center border-b-2 border-[#8a8a8a] pr-3 text-[12px] whitespace-nowrap">
              <span>CL/CRUDE</span>
              <span className="ml-[10px]">Crude Oil Continuous Contract</span>
              <span className="ml-[23px]">{chart.range}</span>
              <span className="ml-[23px]">93.8400</span>
              <span className="ml-[10px]">{chart.change}</span>
            </div>
            <PricePanel />
            <TrendPanel />
            <StrengthPanel />
            <CrossPanel />
            <PerformancePanel />
            <VolumePanel />
            <SignalsPanel />
            <ForcePanel />
            <TimeAxis />
            <div className="flex min-h-[13px] flex-1 items-start justify-end border-t border-[#e2e2e2] bg-[#f7f7f7]">
              <div className={`mt-[2px] h-2 rounded-l-full bg-[#bfbfbf] ${chart.active ? "w-8" : "w-[14px]"}`} />
              <svg width="15" height="12" className="block bg-white">
                <path d="M2 12L14 0M6 12l8-8M10 12l4-4" stroke="#888" />
              </svg>
            </div>
          </main>
        </div>
      </div>
    </ChartContext.Provider>
  );
}

export default function App() {
  return (
    <div className="flex min-h-screen overflow-hidden bg-[#55606e]">
      <ChartWindow chart={weekly} />
      <ChartWindow chart={daily} />
    </div>
  );
}
